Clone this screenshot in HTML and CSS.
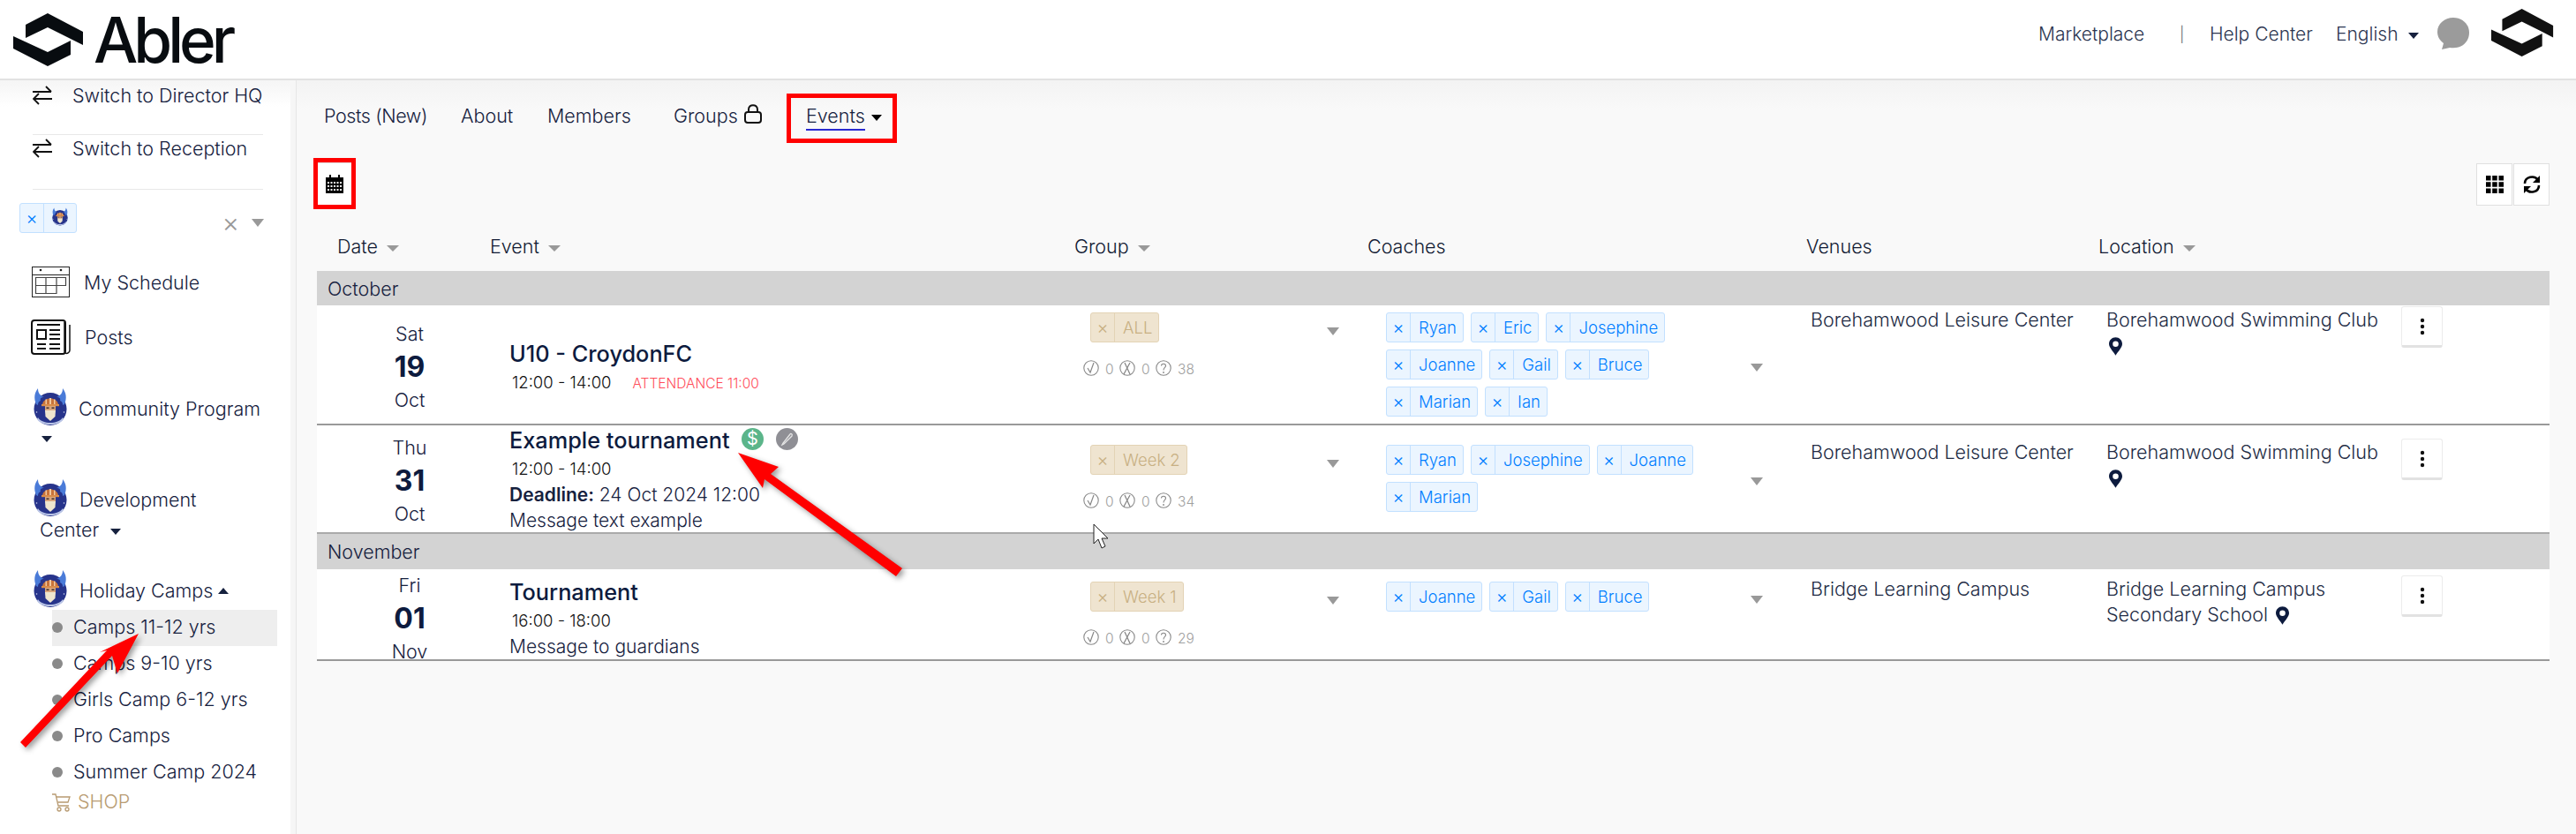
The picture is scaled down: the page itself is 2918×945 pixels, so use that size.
FILE: index.html
```html
<!DOCTYPE html>
<html lang="en">
<head>
<meta charset="utf-8">
<title>Abler Events</title>
<link rel="stylesheet" href="styles.css">
</head>
<body>
<svg class="defs" width="0" height="0" aria-hidden="true">
  <symbol id="mark" viewBox="0 0 80 60">
    <path d="M14 13 39 0 79 21V36L65 29 39 16 14 28Z"/>
    <path d="M0 26 39 44 65 31V47L39 60 0 40Z"/>
  </symbol>
  <symbol id="viking" viewBox="0 0 38 42">
    <circle cx="19" cy="23.500" r="18.500" fill="#27348b"/>
    <path d="M3 18C0 11 1 5 5 0 5 5 7 8 12 10 9 10 7 11 8 14 6 15 5 16 5 19Z" fill="#4a7bd8"/>
    <path d="M35 18C38 11 37 5 33 0 33 5 31 8 26 10 29 10 31 11 30 14 32 15 33 16 33 19Z" fill="#4a7bd8"/>
    <path d="M10 19C10 9 28 9 28 19Z" fill="#c8733a"/>
    <path d="M18 11H20V19H18ZM13.500 12.500H15V19H13.500ZM23 12.500H24.500V19H23Z" fill="#f0c9a0"/>
    <rect x="9" y="18" width="20" height="2.200" fill="#d98c4a"/>
    <rect x="13" y="20" width="12" height="6" fill="#d8a57c"/>
    <rect x="14.500" y="21.500" width="3" height="1.500" fill="#40302a"/>
    <rect x="20.500" y="21.500" width="3" height="1.500" fill="#40302a"/>
    <path d="M13 25H25L24.500 32 19 37 13.500 32Z" fill="#efe6cf"/>
    <path d="M5 33C10 41 28 41 33 33L34 35C29 43 9 43 4 35Z" fill="#b9c4e6"/>
    <circle cx="3.500" cy="27" r=".8" fill="#cfd6f0"/><circle cx="34.500" cy="27" r=".8" fill="#cfd6f0"/>
  </symbol>
  <symbol id="swap" viewBox="0 0 22 22">
    <path d="M0 7H21M15 1 21 7M1 15H22M7 9 1 15 7 21" fill="none" stroke="#111" stroke-width="1.800"/>
  </symbol>
  <symbol id="pin" viewBox="0 0 16 22">
    <path fill-rule="evenodd" d="M8 0C3.500 0 0 3.500 0 8 0 12 5 17 8 22 11 17 16 12 16 8 16 3.500 12.500 0 8 0ZM8 4.500A3.500 3.500 0 1 1 8 11.500 3.500 3.500 0 0 1 8 4.500Z" fill="#0d1b3e"/>
  </symbol>
  <symbol id="dots" viewBox="0 0 6 20">
    <circle cx="3" cy="3" r="2.200"/><circle cx="3" cy="10" r="2.200"/><circle cx="3" cy="17" r="2.200"/>
  </symbol>
  <symbol id="yes" viewBox="0 0 18 18">
    <circle cx="9" cy="9" r="8.200" fill="none" stroke="#888" stroke-width="1.100"/>
    <path d="M5 9 8 14 12 3" fill="none" stroke="#888" stroke-width="1.200"/>
  </symbol>
  <symbol id="no" viewBox="0 0 18 18">
    <circle cx="9" cy="9" r="8.200" fill="none" stroke="#888" stroke-width="1.100"/>
    <path d="M6 3 12 16M12 3 5 16" fill="none" stroke="#888" stroke-width="1.300"/>
  </symbol>
  <symbol id="maybe" viewBox="0 0 18 18">
    <circle cx="9" cy="9" r="8.200" fill="none" stroke="#888" stroke-width="1.100"/>
    <path d="M6.500 6.500C6.500 3.500 11.500 3.500 11.500 6.500 11.500 8.500 9 8.500 9 11.500" fill="none" stroke="#888" stroke-width="1.100"/>
    <circle cx="9" cy="14" r=".9" fill="#888"/>
  </symbol>
</svg>

<header class="topbar">
  <div class="brand">
    <svg class="brand-mark"><use href="#mark"/></svg>
    <span class="brand-name">Abler</span>
  </div>
  <nav class="toplinks">
    <a class="toplink market">Marketplace</a>
    <span class="toplink sep">|</span>
    <a class="toplink help">Help Center</a>
    <a class="toplink lang">English<i class="caret dark"></i></a>
    <svg class="bubble" viewBox="0 0 36 36"><path d="M18 0C28 0 36 7 36 17 36 28 27 36 14 34L5 36 7 29C2 25 0 21 0 16 0 7 8 0 18 0Z" fill="#9b9b9b"/></svg>
    <svg class="top-mark" viewBox="0 0 80 60" preserveAspectRatio="none"><use href="#mark"/></svg>
  </nav>
</header>

<div class="shell">
  <aside class="sidebar">
    <div class="switch first"><svg class="swap"><use href="#swap"/></svg><span>Switch to Director HQ</span></div>
    <div class="switch"><svg class="swap"><use href="#swap"/></svg><span>Switch to Reception</span></div>

    <div class="team-select">
      <span class="team-chip"><span class="chip-x">×</span><span class="team-chip-img"><svg class="mini-viking"><use href="#viking"/></svg></span></span>
      <span class="clear">×</span>
      <i class="caret grey big"></i>
    </div>

    <div class="side-link schedule">
      <svg class="ico-schedule" viewBox="0 0 43 35"><g fill="none" stroke="#222" stroke-width="1"><rect x=".5" y=".5" width="42" height="34"/><path d="M.5 9.500H42.500"/></g><circle cx="10" cy="4" r="1.300" fill="#222"/><circle cx="33" cy="4" r="1.300" fill="#222"/><g fill="none" stroke="#444" stroke-width="1.200"><path d="M4.500 12.500H38.500V21.500H28V30.500H4.500Z"/><path d="M4.500 21.500H28M16 12.500V30.500M28 12.500V21.500"/></g></svg>
      <span>My Schedule</span>
    </div>
    <div class="side-link posts">
      <svg class="ico-posts" viewBox="0 0 45 40"><path d="M38 3V36C38 38 40 39 42 38 43.500 37 44 36 44 35V6" fill="none" stroke="#111" stroke-width="1.500"/><rect x="1" y="1" width="38" height="38" rx="3" fill="none" stroke="#111" stroke-width="2"/><rect x="7" y="12" width="10" height="10" fill="none" stroke="#111" stroke-width="2"/><path d="M7 6H33M21 12H33M21 17H33M21 22H33M7 28H17M21 28H33M7 33H17M21 33H33" stroke="#111" stroke-width="2"/></svg>
      <span>Posts</span>
    </div>

    <div class="team community"><svg class="avatar"><use href="#viking"/></svg><span>Community Program</span></div>
    <i class="caret dark solo"></i>

    <div class="team development"><svg class="avatar"><use href="#viking"/></svg><span>Development</span></div>
    <div class="team-wrap">Center<i class="caret dark"></i></div>

    <div class="team holiday"><svg class="avatar"><use href="#viking"/></svg><span>Holiday Camps</span><i class="caret dark up"></i></div>

    <ul class="sublist">
      <li class="sub active">Camps 11-12 yrs</li>
      <li class="sub">Camps 9-10 yrs</li>
      <li class="sub">Girls Camp 6-12 yrs</li>
      <li class="sub">Pro Camps</li>
      <li class="sub">Summer Camp 2024</li>
    </ul>
    <div class="shop">
      <svg class="cart" viewBox="0 0 21 21"><g fill="none" stroke="#b89b72" stroke-width="1.300"><path d="M0 1H4L7 14H19"/><path d="M5 4H20L18 10H6.500"/><circle cx="8" cy="18" r="2"/><circle cx="17" cy="18" r="2"/></g></svg>
      <span>SHOP</span>
    </div>
  </aside>

  <main class="main">
    <nav class="tabs">
      <a class="tab t-posts">Posts (New)</a>
      <a class="tab t-about">About</a>
      <a class="tab t-members">Members</a>
      <a class="tab t-groups">Groups<svg class="lock" viewBox="0 0 20 22"><rect x="1" y="9" width="18" height="12" rx="3" fill="none" stroke="#111" stroke-width="2"/><path d="M5 9V6C5 -0.5 15 -0.5 15 6V9" fill="none" stroke="#111" stroke-width="2"/></svg></a>
      <a class="tab t-events"><span class="events-label">Events</span><i class="caret black"></i></a>
    </nav>

    <div class="toolbar">
      <button class="tool cal" type="button">
        <svg class="ico-cal" viewBox="0 0 20 21"><path d="M0 3H4V0H6V3H14V0H16V3H20V21H0Z" fill="#000"/><g fill="#fff"><rect x="2" y="8" width="2" height="2"/><rect x="5.500" y="8" width="2" height="2"/><rect x="9" y="8" width="2" height="2"/><rect x="12.500" y="8" width="2" height="2"/><rect x="16" y="8" width="2" height="2"/><rect x="2" y="12" width="2" height="2"/><rect x="5.500" y="12" width="2" height="2"/><rect x="9" y="12" width="2" height="2"/><rect x="12.500" y="12" width="2" height="2"/><rect x="16" y="12" width="2" height="2"/><rect x="2" y="16" width="2" height="2"/><rect x="5.500" y="16" width="2" height="2"/><rect x="9" y="16" width="2" height="2"/><rect x="12.500" y="16" width="2" height="2"/><rect x="16" y="16" width="2" height="2"/></g></svg>
      </button>
      <div class="tool-right">
        <button class="tool sq" type="button"><svg class="ico-grid" viewBox="0 0 20 20"><path d="M0 0H5.500V5.500H0ZM7.200 0H12.700V5.500H7.200ZM14.500 0H20V5.500H14.500ZM0 7.200H5.500V12.700H0ZM7.200 7.200H12.700V12.700H7.200ZM14.500 7.200H20V12.700H14.500ZM0 14.500H5.500V20H0ZM7.200 14.500H12.700V20H7.200ZM14.500 14.500H20V20H14.500Z"/></svg></button>
        <button class="tool sq" type="button"><svg class="ico-refresh" viewBox="0 0 20 22"><path d="M2 10C2 2 13 0 17 6" fill="none" stroke="#000" stroke-width="2.600"/><path d="M19 1V9H11Z"/><path d="M18 12C18 20 7 22 3 16" fill="none" stroke="#000" stroke-width="2.600"/><path d="M1 21V13H9Z"/></svg></button>
      </div>
    </div>

    <section class="table">
      <div class="grid head">
        <div class="h-date">Date<i class="caret grey"></i></div>
        <div class="h-event">Event<i class="caret grey"></i></div>
        <div class="h-group">Group<i class="caret grey"></i></div>
        <div class="h-coach">Coaches</div>
        <div class="h-venue">Venues</div>
        <div class="h-loc">Location<i class="caret grey"></i></div>
      </div>

      <div class="band b-oct">October</div>

      <div class="grid row r1">
        <div class="c-date"><div class="dow">Sat</div><div class="day">19</div><div class="mon">Oct</div></div>
        <div class="c-event">
          <div class="title">U10 - CroydonFC</div>
          <div class="time">12:00 - 14:00<span class="attend">ATTENDANCE 11:00</span></div>
        </div>
        <div class="c-group">
          <div class="group-line"><span class="chip tan"><span class="chip-x">×</span><span class="chip-l">ALL</span></span><i class="caret grey big"></i></div>
          <div class="stats"><svg class="st"><use href="#yes"/></svg><span>0</span><svg class="st"><use href="#no"/></svg><span>0</span><svg class="st"><use href="#maybe"/></svg><span>38</span></div>
        </div>
        <div class="c-coach">
          <div class="chips">
            <span class="chip"><span class="chip-x">×</span><span class="chip-l">Ryan</span></span>
            <span class="chip"><span class="chip-x">×</span><span class="chip-l">Eric</span></span>
            <span class="chip"><span class="chip-x">×</span><span class="chip-l">Josephine</span></span>
            <span class="chip"><span class="chip-x">×</span><span class="chip-l">Joanne</span></span>
            <span class="chip"><span class="chip-x">×</span><span class="chip-l">Gail</span></span>
            <span class="chip"><span class="chip-x">×</span><span class="chip-l">Bruce</span></span>
            <span class="chip"><span class="chip-x">×</span><span class="chip-l">Marian</span></span>
            <span class="chip"><span class="chip-x">×</span><span class="chip-l">Ian</span></span>
          </div>
          <i class="caret grey big"></i>
        </div>
        <div class="c-venue">Borehamwood Leisure Center</div>
        <div class="c-loc">Borehamwood Swimming Club <svg class="pin"><use href="#pin"/></svg></div>
        <div class="c-act"><button class="more" type="button"><svg class="ico-dots"><use href="#dots"/></svg></button></div>
      </div>

      <div class="grid row r2">
        <div class="c-date"><div class="dow">Thu</div><div class="day">31</div><div class="mon">Oct</div></div>
        <div class="c-event">
          <div class="title">Example tournament
            <svg class="badge" viewBox="0 0 25 25"><circle cx="12.500" cy="12.500" r="12.500" fill="#5bb58a"/><text x="12.500" y="19" class="badge-t">$</text></svg>
            <svg class="badge pen" viewBox="0 0 25 25"><circle cx="12.500" cy="12.500" r="12.500" fill="#8f8f95"/><path d="M8 17 7 19 9 18 18 9C19 7 17 5.500 16 7Z" fill="none" stroke="#e6e6e6" stroke-width="1.300"/></svg>
          </div>
          <div class="time">12:00 - 14:00</div>
          <div class="meta"><b>Deadline:</b> 24 Oct 2024 12:00</div>
          <div class="meta">Message text example</div>
        </div>
        <div class="c-group">
          <div class="group-line"><span class="chip tan"><span class="chip-x">×</span><span class="chip-l">Week 2</span></span><i class="caret grey big"></i></div>
          <div class="stats"><svg class="st"><use href="#yes"/></svg><span>0</span><svg class="st"><use href="#no"/></svg><span>0</span><svg class="st"><use href="#maybe"/></svg><span>34</span></div>
        </div>
        <div class="c-coach">
          <div class="chips">
            <span class="chip"><span class="chip-x">×</span><span class="chip-l">Ryan</span></span>
            <span class="chip"><span class="chip-x">×</span><span class="chip-l">Josephine</span></span>
            <span class="chip"><span class="chip-x">×</span><span class="chip-l">Joanne</span></span>
            <span class="chip"><span class="chip-x">×</span><span class="chip-l">Marian</span></span>
          </div>
          <i class="caret grey big"></i>
        </div>
        <div class="c-venue">Borehamwood Leisure Center</div>
        <div class="c-loc">Borehamwood Swimming Club <svg class="pin"><use href="#pin"/></svg></div>
        <div class="c-act"><button class="more" type="button"><svg class="ico-dots"><use href="#dots"/></svg></button></div>
      </div>

      <div class="band b-nov">November</div>

      <div class="grid row r3">
        <div class="c-date"><div class="dow">Fri</div><div class="day">01</div><div class="mon">Nov</div></div>
        <div class="c-event">
          <div class="title">Tournament</div>
          <div class="time">16:00 - 18:00</div>
          <div class="meta">Message to guardians</div>
        </div>
        <div class="c-group">
          <div class="group-line"><span class="chip tan"><span class="chip-x">×</span><span class="chip-l">Week 1</span></span><i class="caret grey big"></i></div>
          <div class="stats"><svg class="st"><use href="#yes"/></svg><span>0</span><svg class="st"><use href="#no"/></svg><span>0</span><svg class="st"><use href="#maybe"/></svg><span>29</span></div>
        </div>
        <div class="c-coach">
          <div class="chips">
            <span class="chip"><span class="chip-x">×</span><span class="chip-l">Joanne</span></span>
            <span class="chip"><span class="chip-x">×</span><span class="chip-l">Gail</span></span>
            <span class="chip"><span class="chip-x">×</span><span class="chip-l">Bruce</span></span>
          </div>
          <i class="caret grey big"></i>
        </div>
        <div class="c-venue">Bridge Learning Campus</div>
        <div class="c-loc">Bridge Learning Campus Secondary School <svg class="pin"><use href="#pin"/></svg></div>
        <div class="c-act"><button class="more" type="button"><svg class="ico-dots"><use href="#dots"/></svg></button></div>
      </div>
    </section>
  </main>
</div>

<svg class="annotations" viewBox="0 0 2918 945" aria-hidden="true">
  <g class="arrow">
    <path d="M836 513 882 529 873 537 1022 644 1015 653 866 543 864 553Z" fill="#f00"/>
    <path d="M157 718 133 763 127 743 29 847 23 841 121 737 113 739Z" fill="#f00"/>
  </g>
  <path class="cursor" d="M1239 594V616L1244 611 1248 621 1252 619 1248 610H1255Z"/>
</svg>
</body>
</html>
```
FILE: styles.css
```css
* { box-sizing: border-box; }
html, body { margin: 0; padding: 0; }
body {
  width: 2918px;
  height: 945px;
  overflow: hidden;
  background: #f9f9f9;
  color: #16213e;
  font-family: "Inter", "Liberation Sans", sans-serif;
  font-weight: 300;
  font-size: 21.500px;
  position: relative;
}
.defs { position: absolute; }
a { color: inherit; text-decoration: none; }
button { font: inherit; padding: 0; cursor: pointer; }
ul { list-style: none; margin: 0; padding: 0; }

/* carets */
.caret { display: inline-block; width: 0; height: 0; border-left: 6px solid transparent; border-right: 6px solid transparent; border-top: 7px solid #16213e; margin-left: 11px; vertical-align: middle; }
.caret.grey { border-top-color: #999; border-left-width: 7px; border-right-width: 7px; margin-left: 10px; }
.caret.grey.big { border-left-width: 7px; border-right-width: 7px; border-top-width: 9px; margin: 0; }
.caret.black { border-top-color: #000; margin-left: 7px; }
.caret.up { border-top: 0; border-bottom: 7px solid #16213e; margin-left: -8px; margin-top: 4px; }

/* top bar */
.topbar { height: 91px; background: #fff; border-bottom: 2px solid #e2e2e2; display: flex; align-items: flex-start; justify-content: space-between; }
.brand { display: flex; align-items: center; margin: 15px 0 0 15px; height: 60px; }
.brand-mark { width: 80px; height: 60px; fill: #080c10; }
.brand-name { font-size: 71px; font-weight: 500; color: #080c10; letter-spacing: -5px; line-height: 60px; margin-left: 11px; }
.toplinks { display: flex; align-items: flex-start; font-size: 21px; padding-right: 25px; }
.toplink { line-height: 30px; margin-top: 24px; color: #2b3550; }
.market { width: 160px; }
.sep { width: 34px; font-size: 17px; color: #666; }
.help { width: 143px; }
.lang { width: 115px; }
.bubble { width: 36px; height: 36px; margin-top: 20px; }
.top-mark { width: 71px; height: 54px; margin: 10px 0 0 25px; fill: #111; }

/* layout */
.shell { display: flex; height: 854px; }
.sidebar { width: 336px; height: 854px; overflow: hidden; flex: none; background: linear-gradient(#f5f5f5, #fff 30px); border-right: 1px solid #e6e6e6; box-shadow: inset -6px 0 0 #f6f6f6; }
.main { flex: 1; padding: 0 30px 0 23px; background: linear-gradient(#f3f3f3, #f9f9f9 34px); min-width: 0; }

/* sidebar */
.switch { margin-left: 37px; width: 261px; height: 62px; padding-top: 0; display: flex; align-items: flex-start; gap: 23px; line-height: 30px; border-bottom: 1px solid #e8e8e8; white-space: nowrap; }
.switch.first { padding-top: 2px; }
.swap { width: 22px; height: 22px; flex: none; margin-top: 4px; }
.team-select { margin: 15px 0 0 22px; width: 277px; height: 34px; display: flex; align-items: flex-start; }
.team-chip { display: flex; height: 34px; width: 65px; background: #ebf5ff; border: 1px solid #c2e0ff; border-radius: 3px; color: #007eff; }
.team-chip .chip-x { width: 27px; }
.team-chip-img { flex: 1; display: flex; justify-content: center; padding-top: 4px; }
.mini-viking { width: 18px; height: 21px; }
.clear { margin-left: auto; color: #999; font-size: 30px; line-height: 30px; margin-top: 7px; }
.team-select .caret.grey.big { margin: 18px 0 0 14px; }
.side-link { display: flex; align-items: center; white-space: nowrap; }
.schedule { margin: 38px 0 0 36px; height: 35px; gap: 16px; }
.ico-schedule { width: 43px; height: 35px; }
.posts { margin: 25px 0 0 35px; height: 40px; gap: 16px; }
.ico-posts { width: 45px; height: 40px; }
.team { display: flex; align-items: center; margin-left: 38px; height: 42px; white-space: nowrap; gap: 14px; }
.team span { padding-top: 4px; }
.avatar { width: 38px; height: 42px; flex: none; }
.community { margin-top: 38px; gap: 13px; }
.caret.solo { display: block; margin: 12px 0 0 47px; }
.development { margin-top: 42px; }
.team-wrap { margin-left: 45px; line-height: 30px; }
.team-wrap .caret { margin-left: 13px; }
.holiday { margin-top: 31px; }
.sublist { margin: 3px 0 0 59px; width: 255px; }
.sub { height: 41px; display: flex; align-items: center; gap: 12px; white-space: nowrap; padding-bottom: 3px; }
.sub::before { content: ""; width: 12px; height: 12px; border-radius: 50%; background: #8a8a8a; flex: none; margin-top: 2px; }
.sub.active { background: #eeeeee; }
.shop { margin: -3px 0 0 59px; display: flex; align-items: center; gap: 8px; color: #b89b72; height: 30px; }
.cart { width: 21px; height: 21px; margin-top: 2px; }

/* tabs */
.tabs { height: 93px; display: flex; align-items: flex-start; padding: 20px 0 0 8px; }
.tab { line-height: 34px; height: 34px; white-space: nowrap; display: block; margin-top: 3px; }
.t-posts { width: 155px; letter-spacing: -.4px; }
.t-about { width: 98px; }
.t-members { width: 143px; }
.t-groups { width: 133px; }
.lock { width: 20px; height: 22px; margin-left: 7px; vertical-align: -1px; }
.t-events { height: 46px; width: 115px; padding: 3px 0 0 17px; margin-top: 0; outline: 5px solid #f00; }
.events-label { display: inline-block; border-bottom: 2px solid #2a2ad0; line-height: 29px; }

/* toolbar */
.toolbar { display: flex; justify-content: space-between; align-items: flex-start; height: 73px; margin-left: 1px; }
.tool { background: #fff; border: 1px solid #e0e0e0; display: flex; align-items: center; justify-content: center; }
.cal { width: 38px; height: 48px; outline: 5px solid #f00; border: 0; border-top: 1px solid #ddd; }
.ico-cal { width: 20px; height: 21px; }
.tool-right { display: flex; gap: 1px; margin-top: 1px; }
.sq { width: 41px; height: 48px; }
.ico-grid { width: 20px; height: 20px; }
.ico-refresh { width: 20px; height: 22px; }

/* table */
.table { width: 2529px; }
.grid { display: grid; grid-template-columns: 189px 663px 332px 496px 333px 344px 172px; }
.head { height: 50px; padding-bottom: 6px; align-items: center; white-space: nowrap; color: #111a33; }
.h-date { padding-left: 23px; }
.h-event { padding-left: 7px; }
.h-group { padding-left: 6px; }
.h-coach { padding-left: 6px; }
.h-venue { padding-left: 7px; }
.h-loc { padding-left: 5px; }
.band { background: #d3d3d3; padding-left: 12px; display: flex; align-items: center; }
.b-oct { height: 39px; }
.b-nov { height: 40px; }
.row { background: #fff; border-bottom: 2px solid #999; }
.r1 { height: 136px; --p: 8px; --dt: 5px; --db: 0px; --et: 7px; --eb: 0px; }
.r2 { height: 123px; --p: 22px; --dt: 3px; --db: 0px; --et: 0px; --eb: 0px; border-bottom-color: #aaa; }
.r3 { height: 104px; --p: 14px; --dt: 0px; --db: 6px; --et: 0px; --eb: 7px; }
.c-date { align-self: center; text-align: center; width: 189px; padding: var(--dt) 0 var(--db) 21px; }
.dow, .mon { line-height: 37px; }
.day { font-size: 32px; font-weight: 700; line-height: 38px; color: #0d1b3e; }
.c-event { align-self: center; padding: var(--et) 0 var(--eb) 29px; }
.title { font-size: 25.300px; font-weight: 500; line-height: 34px; color: #0d1b3e; display: flex; align-items: center; white-space: nowrap; }
.time { font-size: 18.500px; line-height: 30px; padding-left: 3px; font-weight: 300; color: #111; }
.attend { font-size: 15.500px; color: #ff4d5a; margin-left: 24px; font-weight: 300; }
.meta { line-height: 29px; font-size: 21px; }
.meta b { font-weight: 600; }
.badge { width: 25px; height: 25px; margin: -4px 0 0 13px; }
.badge.pen { margin-left: 14px; }
.badge-t { fill: #fff; font-size: 20px; font-weight: 400; text-anchor: middle; }
.c-group { padding: var(--p) 0 0 24px; }
.group-line { display: flex; justify-content: space-between; align-items: center; width: 282px; }
.group-line .caret.grey.big { margin-top: 8px; }
.stats { display: flex; align-items: center; color: #a0a0a0; font-size: 15.500px; margin: 20px 0 0 -8px; height: 18px; }
.stats span { margin: 2px 0 0 7px; min-width: 16px; }
.st { width: 18px; height: 18px; flex: none; }
.c-coach { padding: var(--p) 0 0 27px; display: flex; align-items: center; align-self: start; }
.chips { width: 400px; display: flex; flex-wrap: wrap; gap: 8px; align-content: flex-start; }
.chip { display: inline-flex; height: 34px; background: #ebf5ff; border: 1px solid #c2e0ff; border-radius: 3px; color: #007eff; line-height: 32px; white-space: nowrap; font-size: 18.500px; }
.chip-x { width: 27px; text-align: center; border-right: 1px solid #c2e0ff; flex: none; font-size: 20px; line-height: 32px; display: block; }
.chip-l { padding: 0 7px 0 9px; display: block; }
.chip.tan { background: #efe4d0; border-color: #e3d3b5; color: #c8b083; }
.chip.tan .chip-x { border-right-color: #e3d3b5; }
.c-coach .caret.grey.big { margin: 6px 0 0 13px; }
.c-venue { padding: calc(var(--p) - 6px) 0 0 12px; line-height: 29px; white-space: nowrap; color: #222b44; }
.c-loc { padding: calc(var(--p) - 6px) 10px 0 14px; line-height: 29px; color: #222b44; }
.pin { width: 15px; height: 21px; vertical-align: -4px; margin-left: 3px; }
.c-act { padding: calc(var(--p) - 7px) 0 0 4px; }
.more { width: 47px; height: 47px; background: #fff; border: 1px solid #ececec; border-bottom: 3px solid #e2e2e2; border-radius: 3px; display: flex; align-items: center; justify-content: center; }
.ico-dots { width: 6px; height: 20px; fill: #111; }

/* annotations */
.annotations { position: absolute; left: 0; top: 0; width: 2918px; height: 945px; pointer-events: none; }
.arrow { filter: drop-shadow(3px 3px 3px rgba(0,0,0,.4)); }
.cursor { fill: #fff; stroke: #222; stroke-width: 1; }
```
